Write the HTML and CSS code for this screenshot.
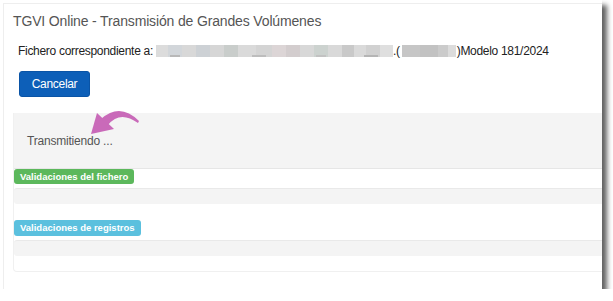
FILE: index.html
```html
<!DOCTYPE html>
<html lang="es">
<head>
<meta charset="utf-8">
<title>TGVI Online</title>
<link rel="stylesheet" href="styles.css">
</head>
<body>
<div class="window">
  <div class="inner">
    <h1 class="title">TGVI Online - Transmisión de Grandes Volúmenes</h1>
    <p class="fichero">Fichero correspondiente a: <span class="blur blur-a"></span>.(<span class="blur blur-b"></span>)Modelo 181/2024</p>
    <button class="cancel" type="button">Cancelar</button>
    <div class="box">
      <div class="status">Transmitiendo ...</div>
      <span class="label label-green">Validaciones del fichero</span>
      <div class="bar"></div>
      <span class="label label-blue">Validaciones de registros</span>
      <div class="bar"></div>
    </div>
  </div>
  <svg class="arrow" width="60" height="40" viewBox="84 104 60 40" aria-hidden="true">
    <path d="M91 134 L97 113 L114 129 Z" fill="#c96ab9"/>
    <path d="M101 119 Q120 102 139 121 L138 123 Q120 110 108 125 Z" fill="#c96ab9"/>
  </svg>
</div>
</body>
</html>
```

FILE: styles.css
```css
html, body {
  margin: 0;
  padding: 0;
  background: #ffffff;
}

body {
  font-family: "Liberation Sans", Arial, sans-serif;
}

.window {
  position: relative;
  width: 602px;
  height: 289px;
  background: #ffffff;
  box-shadow: 5px 5px 5px rgba(0, 0, 0, 0.62);
  overflow: hidden;
}

.inner {
  margin: 3px 0 0 3px;
  height: 286px;
  border-top: 1px solid #eeeeee;
  border-left: 1px solid #eeeeee;
  padding-left: 9px;
  box-sizing: border-box;
}

.title {
  margin: 8px 0 0 0;
  font-size: 14px;
  line-height: 18px;
  font-weight: normal;
  color: #555555;
  letter-spacing: -0.15px;
}

.fichero {
  margin: 13px 0 0 5px;
  font-size: 12px;
  line-height: 16px;
  color: #222222;
  letter-spacing: -0.3px;
  white-space: nowrap;
  display: flex;
  align-items: center;
}

.blur {
  display: inline-block;
  height: 12px;
}

.blur-a {
  width: 237px;
  margin-left: 3px;
  background:
    linear-gradient(to right,
      transparent 0, transparent 14px, #b8b8b8 14px, #b8b8b8 24px,
      transparent 24px, transparent 96px, #bdbdbd 96px, #bdbdbd 110px,
      transparent 110px, transparent 160px, #c2c2c2 160px, #c2c2c2 170px,
      transparent 170px, transparent 208px, #b5b5b5 208px, #b5b5b5 222px,
      transparent 222px) bottom / 100% 2px no-repeat,
    linear-gradient(to right,
      #dcdcdc 0, #dcdcdc 12px, #d2d6da 12px, #d2d6da 26px,
      #d8d8d8 26px, #d8d8d8 40px, #cdd1d5 40px, #cdd1d5 54px,
      #d6d6d6 54px, #d6d6d6 68px, #c9cdcb 68px, #c9cdcb 82px,
      #dadada 82px, #dadada 100px, #d4d4d4 100px, #d4d4d4 116px,
      #dcd5d6 116px, #dcd5d6 130px, #d3cdce 130px, #d3cdce 144px,
      #d8d8d8 144px, #d8d8d8 158px, #ccd2cf 158px, #ccd2cf 172px,
      #d9d9d9 172px, #d9d9d9 186px, #c9c9c9 186px, #c9c9c9 198px,
      #dadada 198px, #dadada 210px, #d1d1d1 210px, #d1d1d1 224px,
      #dfdfdf 224px, #dfdfdf 237px);
}

.blur-b {
  width: 54px;
  margin: 0 1px 0 2px;
  background: linear-gradient(to right,
    #c6c6c6 0, #c6c6c6 18px, #c2c2c2 18px, #c2c2c2 36px,
    #cbcbcb 36px, #cbcbcb 46px, #dcdcdc 46px, #dcdcdc 54px);
}

.cancel {
  display: block;
  margin: 12px 0 0 6px;
  width: 71px;
  height: 26px;
  padding: 0;
  border: 1px solid #0a54a6;
  border-radius: 3px;
  background: #0d5fb8;
  color: #ffffff;
  font-family: "Liberation Sans", Arial, sans-serif;
  font-size: 12px;
  letter-spacing: -0.3px;
}

.box {
  margin: 16px -12px 0 0;
  border: 1px solid #f0f0f0;
  border-top: none;
  border-radius: 0 0 4px 4px;
  padding-bottom: 15px;
}

.status {
  height: 55px;
  background: #f4f4f4;
  border-bottom: 1px solid #e6e6e6;
  display: flex;
  align-items: center;
  padding-left: 13px;
  font-size: 12px;
  color: #555555;
  letter-spacing: -0.2px;
}

.label {
  display: block;
  width: fit-content;
  height: 15px;
  line-height: 15px;
  padding: 0 6px;
  border-radius: 3px;
  color: #ffffff;
  font-weight: bold;
  font-size: 9.5px;
  white-space: nowrap;
}

.label-green {
  background: #5cb85c;
}

.label-blue {
  margin-top: 16px;
  height: 16px;
  line-height: 16px;
  background: #5bc0de;
}

.bar {
  margin-top: 4px;
  height: 15px;
  background: #f4f4f4;
  border-top: 1px solid #e9e9e9;
  border-radius: 3px 0 0 3px;
}

.arrow {
  position: absolute;
  left: 84px;
  top: 104px;
}
```
